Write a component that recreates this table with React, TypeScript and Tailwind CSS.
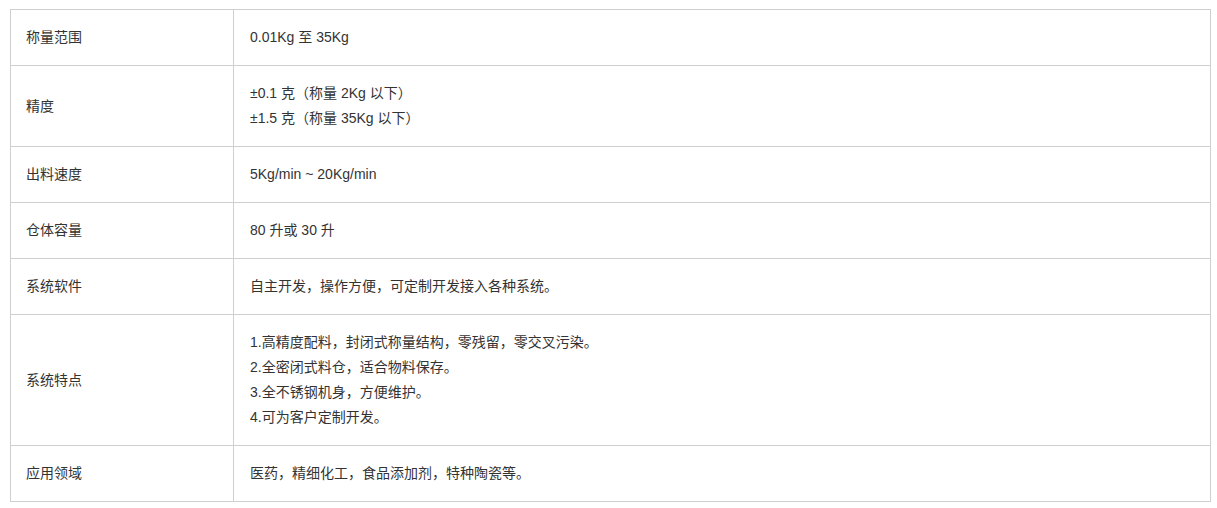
const rows: { label: string; lines: string[] }[] = [
  { label: "称量范围", lines: ["0.01Kg 至 35Kg"] },
  { label: "精度", lines: ["±0.1 克（称量 2Kg 以下）", "±1.5 克（称量 35Kg 以下）"] },
  { label: "出料速度", lines: ["5Kg/min ~ 20Kg/min"] },
  { label: "仓体容量", lines: ["80 升或 30 升"] },
  { label: "系统软件", lines: ["自主开发，操作方便，可定制开发接入各种系统。"] },
  {
    label: "系统特点",
    lines: [
      "1.高精度配料，封闭式称量结构，零残留，零交叉污染。",
      "2.全密闭式料仓，适合物料保存。",
      "3.全不锈钢机身，方便维护。",
      "4.可为客户定制开发。",
    ],
  },
  { label: "应用领域", lines: ["医药，精细化工，食品添加剂，特种陶瓷等。"] },
];

export default function App() {
  return (
    <div className="min-h-screen bg-white pt-[9px] pl-[10px] font-['Liberation_Sans','Noto_Sans_CJK_SC',sans-serif] text-[14px] leading-[25px] text-[#333]">
      <table className="w-[1201px] border-collapse border border-[#cfcfcf]">
        <tbody>
          {rows.map((row) => (
            <tr key={row.label}>
              <td className="w-[223px] border border-[#cfcfcf] py-[15px] pl-[15px] align-middle">
                {row.label}
              </td>
              <td className="border border-[#cfcfcf] py-[15px] pl-[16px] align-middle">
                {row.lines.map((line) => (
                  <div key={line}>{line}</div>
                ))}
              </td>
            </tr>
          ))}
        </tbody>
      </table>
    </div>
  );
}
